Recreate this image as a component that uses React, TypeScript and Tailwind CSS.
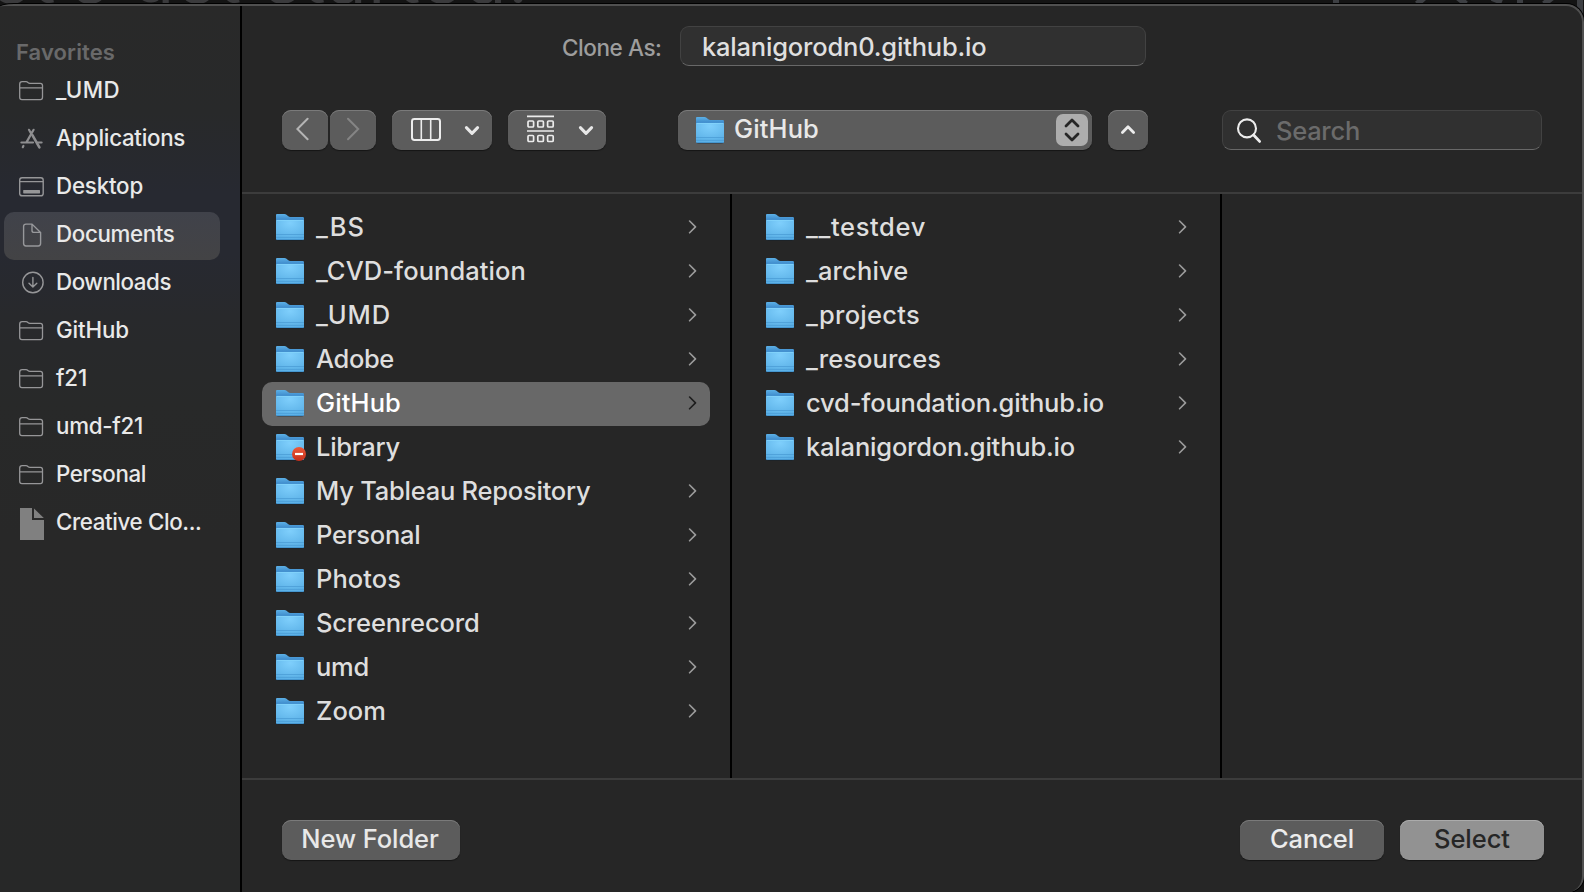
import React from "react";

function SideFolder() {
  return (
    <svg width="26" height="22" viewBox="0 0 26 22" fill="none" stroke="#969698" strokeWidth="1.3">
      <path d="M1.7 4.2Q1.7 1.7 4.1 1.7H8Q9.1 1.7 9.9 2.5Q10.8 3.3 11.9 3.3H22.4Q24.5 3.3 24.5 5.6V17.3Q24.5 19.6 22.4 19.6H3.9Q1.7 19.6 1.7 17.3ZM1.7 7.9H24.5" />
    </svg>
  );
}

function AppsIcon() {
  return (
    <svg width="26" height="22" viewBox="0 0 26 22" fill="none" stroke="#8e8e90" strokeWidth="2.2" strokeLinecap="round">
      <path d="M15.6 1.8 8.4 14.4M11 1.8 12.8 5M3.4 14.5H15M19.8 14.5H23.6M5.4 18 4.8 19.2" />
      <path d="M14.4 7.2 21.4 19.4" strokeWidth="2.6" />
    </svg>
  );
}

function DesktopIcon() {
  return (
    <svg width="26" height="22" viewBox="0 0 26 22" fill="none" stroke="#969698" strokeWidth="1.4">
      <rect x="1.7" y="1.8" width="23.5" height="18" rx="2.4" />
      <path d="M1.7 5.6H25.2" />
      <rect x="5.2" y="14" width="16.8" height="3.4" rx=".6" fill="#969698" stroke="none" />
    </svg>
  );
}

function DocIcon() {
  return (
    <svg width="26" height="26" viewBox="0 0 26 26" fill="none" stroke="#97989b" strokeWidth="1.4">
      <path d="M8 2.1H14L22.6 10.6V21.6Q22.6 24 20.2 24H8Q5.6 24 5.6 21.6V4.5Q5.6 2.1 8 2.1ZM14 2.4V8.4Q14 10.4 16 10.4H22.4" />
    </svg>
  );
}

function DownIcon() {
  return (
    <svg width="26" height="26" viewBox="0 0 26 26" fill="none" stroke="#969698" strokeWidth="1.4" strokeLinecap="round" strokeLinejoin="round">
      <circle cx="14.9" cy="12.5" r="10.2" />
      <path d="M14.9 7.5V16.9M11 13.3 14.9 17.1 18.8 13.3" />
    </svg>
  );
}

function FileIcon() {
  return (
    <svg width="27" height="34" viewBox="0 0 27 34" fill="#808080">
      <path d="M2 2H14V14H26V34H2Z" />
      <path d="M16 2.6 25.8 12H16Z" />
    </svg>
  );
}

function BlueFolder({ badge }: { badge?: boolean }) {
  return (
    <svg className="shrink-0" width="32" height="30" viewBox="0 0 32 30">
      <defs>
        <linearGradient id="fb" x1="0" y1="0" x2="0" y2="1">
          <stop offset="0" stopColor="#5cb0e6" />
          <stop offset=".25" stopColor="#3a86c8" />
        </linearGradient>
        <radialGradient id="ff" cx=".5" cy=".15" r=".9">
          <stop offset="0" stopColor="#7fcffc" />
          <stop offset="1" stopColor="#58aee5" />
        </radialGradient>
        <linearGradient id="rd" x1="0" y1="0" x2="0" y2="1">
          <stop offset="0" stopColor="#ee5a3a" />
          <stop offset="1" stopColor="#c52f1b" />
        </linearGradient>
      </defs>
      <rect x="0.5" y="6" width="27" height="22" rx="2" fill="#000" opacity=".25" />
      <path d="M0 2Q0 1 1 1H8.4Q9.6 1 10.5 1.8L12 3.1Q13 4 14.4 4H26.8Q28 4 28 5.2V25.6Q28 27 26.8 27H1.4Q0 27 0 25.6Z" fill="url(#fb)" />
      <path d="M0 8Q0 7 1 7H27Q28 7 28 8V25.6Q28 27 26.8 27H1.4Q0 27 0 25.6Z" fill="url(#ff)" />
      <path d="M.5 7.4H27.5" stroke="#86d6fd" strokeWidth=".8" />
      <path d="M0 21.5H28M0 24.4H28" stroke="#4b9dd5" strokeWidth=".8" />
      <path d="M.6 26.6H27.4" stroke="#3f8dc6" strokeWidth=".8" />
      {badge && <circle cx="23" cy="21" r="7" fill="url(#rd)" />}
      {badge && <rect x="19" y="19.9" width="8" height="2.2" fill="#fff" />}
    </svg>
  );
}

type Item = { name: string; w: number; badge?: boolean; selected?: boolean };

function Label({ text, w, size, weight = 450, color }: { text: string; w: number; size: number; weight?: number; color: string }) {
  const ref = React.useRef<HTMLSpanElement>(null);
  const [ls, setLs] = React.useState(0);
  React.useLayoutEffect(() => {
    if (!ref.current) return;
    const natural = ref.current.getBoundingClientRect().width - ls * text.length;
    setLs((w - natural) / text.length);
  }, []);
  return (
    <span ref={ref} className="inline-block whitespace-pre leading-none" style={{ fontSize: size, fontWeight: weight, color, letterSpacing: ls }}>
      {text}
    </span>
  );
}

const side: { name: string; w: number; icon: React.ReactNode }[] = [
  { name: "_UMD", w: 64, icon: <SideFolder /> },
  { name: "Applications", w: 129, icon: <AppsIcon /> },
  { name: "Desktop", w: 87, icon: <DesktopIcon /> },
  { name: "Documents", w: 118.5, icon: <DocIcon /> },
  { name: "Downloads", w: 115, icon: <DownIcon /> },
  { name: "GitHub", w: 73, icon: <SideFolder /> },
  { name: "f21", w: 31, icon: <SideFolder /> },
  { name: "umd-f21", w: 87, icon: <SideFolder /> },
  { name: "Personal", w: 90, icon: <SideFolder /> },
  { name: "Creative Clo...", w: 145.5, icon: <FileIcon /> },
];

const colA: Item[] = [
  { name: "_BS", w: 49 },
  { name: "_CVD-foundation", w: 210 },
  { name: "_UMD", w: 75 },
  { name: "Adobe", w: 78 },
  { name: "GitHub", w: 85, selected: true },
  { name: "Library", w: 84, badge: true },
  { name: "My Tableau Repository", w: 274.5 },
  { name: "Personal", w: 104.5 },
  { name: "Photos", w: 85 },
  { name: "Screenrecord", w: 163.5 },
  { name: "umd", w: 53 },
  { name: "Zoom", w: 70 },
];

const colB: Item[] = [
  { name: "__testdev", w: 120 },
  { name: "_archive", w: 102.5 },
  { name: "_projects", w: 114 },
  { name: "_resources", w: 135 },
  { name: "cvd-foundation.github.io", w: 298 },
  { name: "kalanigordon.github.io", w: 269 },
];

function Column({ items }: { items: Item[] }) {
  return (
    <div className="w-[490px] shrink-0 border-r-2 border-black pl-5 pr-5 pt-3">
      {items.map((it) => (
        <div key={it.name} className={"flex h-11 items-center rounded-[10px] pl-3.5 pr-3 " + (it.selected ? "bg-[#686868]" : "")}>
          <BlueFolder badge={it.badge} />
          <div className="ml-2 flex-1">
            <Label text={it.name} w={it.w} size={25.5} color={it.selected ? "#ffffff" : "#dedede"} weight={it.selected ? 500 : 450} />
          </div>
          {!it.badge && (
            <svg width="10" height="16" viewBox="0 0 10 16" fill="none" stroke={it.selected ? "#1d1d1d" : "#9b9b9b"} strokeWidth="1.6" strokeLinecap="round" strokeLinejoin="round">
              <path d="M1.6 1 7.5 6.9 1.6 12.8" />
            </svg>
          )}
        </div>
      ))}
    </div>
  );
}

const btn = "flex h-10 items-center rounded-[9px] bg-[#5c5c5c] shadow-[inset_0_1px_0_#7a7a7a,0_1px_1px_#161616]";
const field = "flex h-10 items-center rounded-[9px] border border-[#424242] border-b-[#686868] bg-[#303030]";

function Down() {
  return (
    <svg width="16" height="12" viewBox="0 0 16 12" fill="none" stroke="#e8e8e8" strokeWidth="3" strokeLinecap="round" strokeLinejoin="round">
      <path d="M2.4 3.6 8 9.4 13.6 3.6" />
    </svg>
  );
}

export default function App() {
  return (
    <div className="relative h-[892px] w-[1584px] overflow-hidden bg-[#141414] font-['Inter',sans-serif]">
      <div className="absolute -left-2.5 top-[-57px] whitespace-pre text-[70px] leading-none tracking-[1.6px] text-[#3a3a3c]">et’s get started!</div>
      <svg className="absolute left-[1320px] top-0" width="264" height="30" viewBox="0 0 264 30" fill="none" stroke="#3d3f43" strokeWidth="6">
        <path d="M16 0V3M97 4 106-4M136-4 146 4M172-2 182 2M197 1H203M224 4 234-4" />
        <path d="M260 0V30" />
      </svg>
      <div className="relative flex h-full pt-[4px]">
        <div className="flex w-full overflow-hidden rounded-tl-[14px_3px] rounded-tr-[18px] rounded-br-[16px] border-r-2 border-t-2 border-[#505050] bg-[#262626] shadow-[0_0_0_1px_#000]">
          <aside className="w-[242px] shrink-0 border-r-2 border-black bg-[linear-gradient(180deg,#292929_0%,#28292a_12%,#272931_21%,#272931_28%,#28292c_35%,#282929_45%,#282828_60%,#272828_100%)] pl-1 pt-[33px]">
            <div className="mb-[3px] flex h-[26px] items-center pl-3">
              <Label text="Favorites" w={99} size={22} weight={600} color="#69696a" />
            </div>
            {side.map((s) => (
              <div key={s.name} className={"flex h-12 w-[216px] items-center rounded-[10px] pb-0.5 pl-3.5 " + (s.name === "Documents" ? "bg-[linear-gradient(180deg,#40424a,#434345)]" : "")}>
                <div className="flex w-[38px] shrink-0">{s.icon}</div>
                <div className="-mt-0.5 flex">
                  <Label text={s.name} w={s.w} size={22.3} weight={500} color="#e9e9e9" />
                </div>
              </div>
            ))}
          </aside>
          <main className="flex min-w-0 flex-1 flex-col">
            <header className="h-[188px] shrink-0 border-b-2 border-[#3c3c3c]">
              <div className="flex h-10 items-center pl-[320px] mt-5">
                <div className="flex w-[118px] pt-1">
                  <Label text="Clone As:" w={99.5} size={22.5} color="#9d9d9d" />
                </div>
                <div className={field + " w-[466px] pl-[21px] pt-px"}>
                  <Label text="kalanigorodn0.github.io" w={284.5} size={25.5} color="#dfdfdf" />
                </div>
              </div>
              <div className="mt-11 flex items-center pl-10">
                <div className={btn + " w-[46px] justify-center"}>
                  <svg width="18" height="26" viewBox="0 0 18 26" fill="none" stroke="#b4b4b4" strokeWidth="2" strokeLinecap="round"><path d="M11.6 1.8 1.4 12 11.6 22.2" /></svg>
                </div>
                <div className={btn + " ml-0.5 w-[46px] justify-center"}>
                  <svg width="18" height="26" viewBox="0 0 18 26" fill="none" stroke="#858585" strokeWidth="2" strokeLinecap="round"><path d="M4 1.8 14.2 12 4 22.2" /></svg>
                </div>
                <div className={btn + " ml-4 w-[100px] justify-between pl-[18px] pr-3"}>
                  <svg width="32" height="26" viewBox="0 0 32 26" fill="none" stroke="#ececec"><rect x="2" y="2" width="28" height="21" rx="2.4" strokeWidth="2" /><path d="M11.3 2V23M20.7 2V23" strokeWidth="1.6" /></svg>
                  <Down />
                </div>
                <div className={btn + " ml-4 w-[98px] justify-between pl-[18px] pr-3"}>
                  <svg width="30" height="30" viewBox="0 0 30 30" fill="none" stroke="#ececec" strokeWidth="1.7">
                    <path d="M1 1.3H28M1 16H28" />
                    <rect x="2" y="6" width="5.6" height="6" rx="1" /><rect x="11.8" y="6" width="5.6" height="6" rx="1" /><rect x="21.6" y="6" width="5.6" height="6" rx="1" />
                    <rect x="2" y="20.5" width="5.6" height="6" rx="1" /><rect x="11.8" y="20.5" width="5.6" height="6" rx="1" /><rect x="21.6" y="20.5" width="5.6" height="6" rx="1" />
                  </svg>
                  <Down />
                </div>
                <div className={btn + " ml-[72px] w-[414px] pl-[18px] pr-1"}>
                  <div className="pt-0.5"><BlueFolder /></div>
                  <div className="-mt-0.5 ml-[6px] flex flex-1"><Label text="GitHub" w={85} size={25.5} color="#e8e8e8" /></div>
                  <div className="flex h-8 w-8 items-center justify-center rounded-[7px] bg-[#adadad]">
                    <svg width="18" height="26" viewBox="0 0 18 26" fill="none" stroke="#262626" strokeWidth="2.8" strokeLinecap="round" strokeLinejoin="round"><path d="M3 9 9 3 15 9M3 17 9 23 15 17" /></svg>
                  </div>
                </div>
                <div className={btn + " ml-4 w-10 justify-center"}>
                  <svg width="16" height="12" viewBox="0 0 16 12" fill="none" stroke="#ececec" strokeWidth="2.8" strokeLinecap="round" strokeLinejoin="round"><path d="M2.4 8.4 8 2.8 13.6 8.4" /></svg>
                </div>
                <div className={field + " ml-[74px] w-80 pl-[13px]"}>
                  <svg width="28" height="28" viewBox="0 0 28 28" fill="none" stroke="#ececec" strokeLinecap="round"><circle cx="11" cy="12.4" r="9" strokeWidth="2.1" /><path d="M17.6 19 23.6 25.4" strokeWidth="2.8" /></svg>
                  <div className="ml-3 flex pt-0.5"><Label text="Search" w={84} size={25.5} color="#6b6b6b" /></div>
                </div>
              </div>
            </header>
            <div className="flex h-[584px] shrink-0">
              <Column items={colA} />
              <Column items={colB} />
            </div>
            <footer className="flex flex-1 items-start border-t-2 border-[#3c3c3c] pl-10 pr-[38px] pt-10">
              <div className={btn + " w-[178px] justify-center pb-0.5 pr-0.5"}><Label text="New Folder" w={137.5} size={25.5} color="#e8e8e8" /></div>
              <div className={btn + " ml-auto w-36 justify-center pb-0.5"}><Label text="Cancel" w={84} size={25.5} weight={500} color="#ececec" /></div>
              <div className="ml-4 flex h-10 w-36 items-center justify-center rounded-[9px] bg-[#929292] pb-0.5 shadow-[inset_0_1px_0_#ababab,0_1px_1px_#161616]"><Label text="Select" w={76} size={25.5} color="#262626" /></div>
            </footer>
          </main>
        </div>
      </div>
    </div>
  );
}
